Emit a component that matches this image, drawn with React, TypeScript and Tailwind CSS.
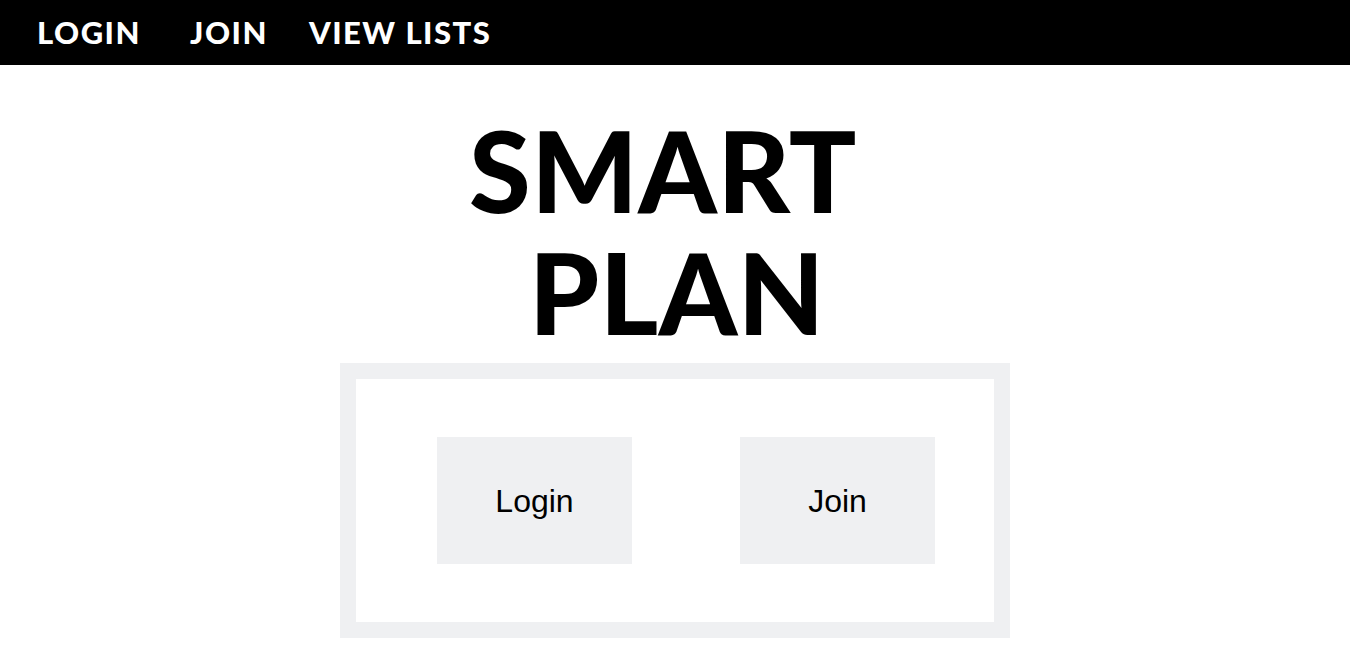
export default function App() {
  return (
    <div className="min-h-[650px] bg-white" style={{ fontFamily: '"Liberation Sans", Arial, sans-serif' }}>
      {/* Top nav */}
      <nav className="flex h-[65px] items-center bg-black pl-[37px] text-white" style={{ fontFamily: 'Lato, "Noto Sans", sans-serif' }}>
        <a className="text-[31px] font-black tracking-[1.5px]">LOGIN</a>
        <a className="ml-[49px] text-[31px] font-black tracking-[1.5px]">JOIN</a>
        <a className="ml-[41px] text-[31px] font-black tracking-[1.5px]">VIEW LISTS</a>
      </nav>

      {/* Title */}
      <h1
        className="mt-[44px] text-center text-[112px] leading-[122px] font-black tracking-[0.5px] text-black"
        style={{ fontFamily: 'Lato, "Noto Sans", sans-serif' }}
      >
        <span className="block pr-[24px]">SMART</span>
        <span className="block pl-[4px]">PLAN</span>
      </h1>

      {/* Card */}
      <div className="mx-auto mt-[10px] w-[670px] border-[16px] border-[#eff0f2] bg-white">
        <div className="flex py-[58px] pl-[81px]">
          <button className="flex h-[127px] w-[195px] items-center justify-center bg-[#eff0f2] text-[32px] text-black">
            Login
          </button>
          <button className="ml-[108px] flex h-[127px] w-[195px] items-center justify-center bg-[#eff0f2] text-[32px] text-black">
            Join
          </button>
        </div>
      </div>
    </div>
  )
}
